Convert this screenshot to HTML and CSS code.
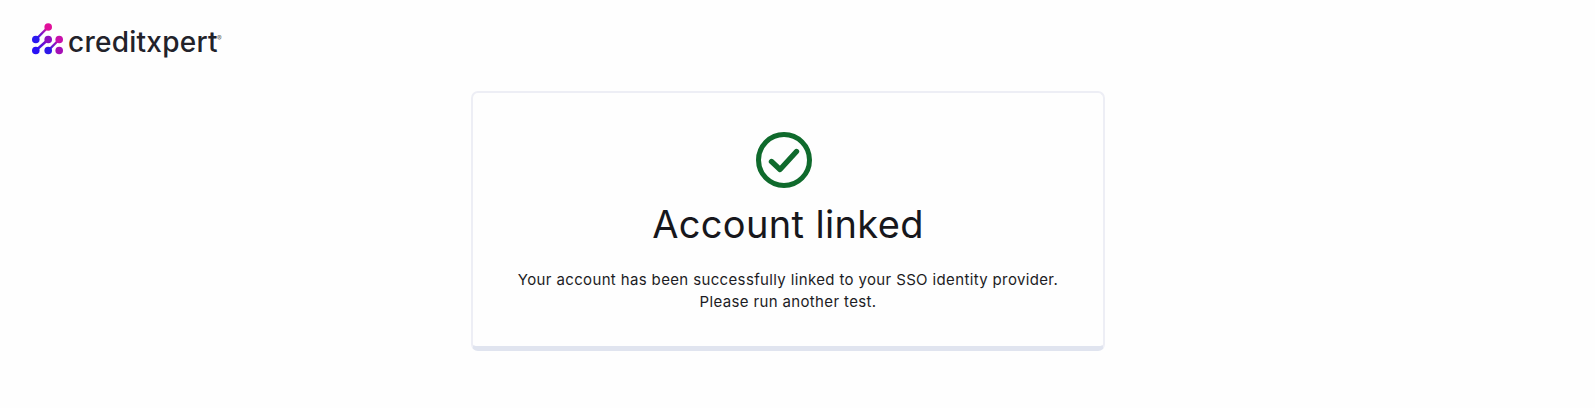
FILE: index.html
```html
<!DOCTYPE html>
<html lang="en">
<head>
<meta charset="utf-8">
<title>Account linked</title>
<link rel="stylesheet" href="styles.css">
</head>
<body>
<header class="top">
  <a class="logo" href="#">
    <svg class="logo-mark" width="34" height="34" viewBox="0 0 34 34" aria-hidden="true">
      <defs>
        <linearGradient id="a" gradientUnits="userSpaceOnUse" x1="4" y1="16" x2="16" y2="4">
          <stop offset="0" stop-color="#2a18f0"/><stop offset="1" stop-color="#e0109a"/>
        </linearGradient>
        <linearGradient id="b" gradientUnits="userSpaceOnUse" x1="4" y1="28" x2="16" y2="16">
          <stop offset="0" stop-color="#2a12f5"/><stop offset="1" stop-color="#8d0fc0"/>
        </linearGradient>
        <linearGradient id="c" gradientUnits="userSpaceOnUse" x1="16" y1="28" x2="27" y2="16">
          <stop offset="0" stop-color="#2e18e8"/><stop offset="1" stop-color="#c810aa"/>
        </linearGradient>
      </defs>
      <path d="M3.8 16.5 16.2 4" stroke="url(#a)" stroke-width="2.4" fill="none"/>
      <path d="M3.8 27.5 16.2 16.5" stroke="url(#b)" stroke-width="2.4" fill="none"/>
      <path d="M16.2 27.5 27.2 16.5" stroke="url(#c)" stroke-width="2.4" fill="none"/>
      <circle cx="16.2" cy="4" r="3.8" fill="#e0109a"/>
      <circle cx="3.8" cy="16.5" r="3.8" fill="#2a18f0"/>
      <circle cx="16.2" cy="16.5" r="3.8" fill="#8d0fc0"/>
      <circle cx="27.2" cy="16.5" r="3.8" fill="#c810aa"/>
      <circle cx="3.8" cy="27.5" r="3.8" fill="#2a12f5"/>
      <circle cx="16.2" cy="27.5" r="3.8" fill="#2e18e8"/>
      <circle cx="27.2" cy="27.5" r="3.8" fill="#a50fb5"/>
    </svg>
    <span class="logo-text">creditxpert<span class="reg">®</span></span>
  </a>
</header>
<main class="main">
  <section class="card">
    <svg class="check" width="56" height="56" viewBox="0 0 56 56" aria-hidden="true">
      <circle cx="28" cy="28" r="25.5" fill="none" stroke="#0f6a2c" stroke-width="5"/>
      <path d="M15.5 29.5 24 37.5 40.5 19.5" fill="none" stroke="#0f6a2c" stroke-width="5.4" stroke-linecap="round" stroke-linejoin="round"/>
    </svg>
    <h1 class="title">Account linked</h1>
    <p class="message">Your account has been successfully linked to your SSO identity provider.<br>Please run another test.</p>
  </section>
</main>
</body>
</html>
```
FILE: styles.css
```css
* { box-sizing: border-box; }
html, body { margin: 0; height: 100%; }
body {
  background: #fefefe;
  color: #1a1a1f;
  font-family: "Inter", "Liberation Sans", sans-serif;
  overflow: hidden;
}
.top { padding: 22px 32px 0; height: 91px; }
.logo {
  display: inline-flex;
  align-items: flex-start;
  gap: 2px;
  color: #22222a;
  text-decoration: none;
}
.logo-mark { flex: none; margin-top: 1px; }
.logo-text {
  font-size: 28px;
  font-weight: 500;
  letter-spacing: 0.25px;
  line-height: 40px;
  position: relative;
  padding-right: 4px;
}
.reg {
  position: absolute;
  right: 0;
  top: 13px;
  font-size: 7px;
  line-height: 1;
  color: #666;
  letter-spacing: 0;
}
.main { display: flex; justify-content: center; padding-right: 19px; }
.card {
  width: 634px;
  height: 260px;
  border: 2px solid #edeef5;
  border-bottom: 5px solid #e0e4ef;
  border-radius: 7px;
  background: #fefefe;
  display: flex;
  flex-direction: column;
  align-items: center;
  padding-top: 39px;
}
.check { display: block; margin-right: 9px; }
.title {
  margin: 11px 0 0;
  font-size: 38px;
  font-weight: 400;
  line-height: 50px;
  color: #17171c;
  letter-spacing: 0.35px;
}
.message {
  margin: 20px 0 0;
  font-size: 15px;
  line-height: 22px;
  text-align: center;
  color: #1c1c24;
  letter-spacing: 0.36px;
}
```
